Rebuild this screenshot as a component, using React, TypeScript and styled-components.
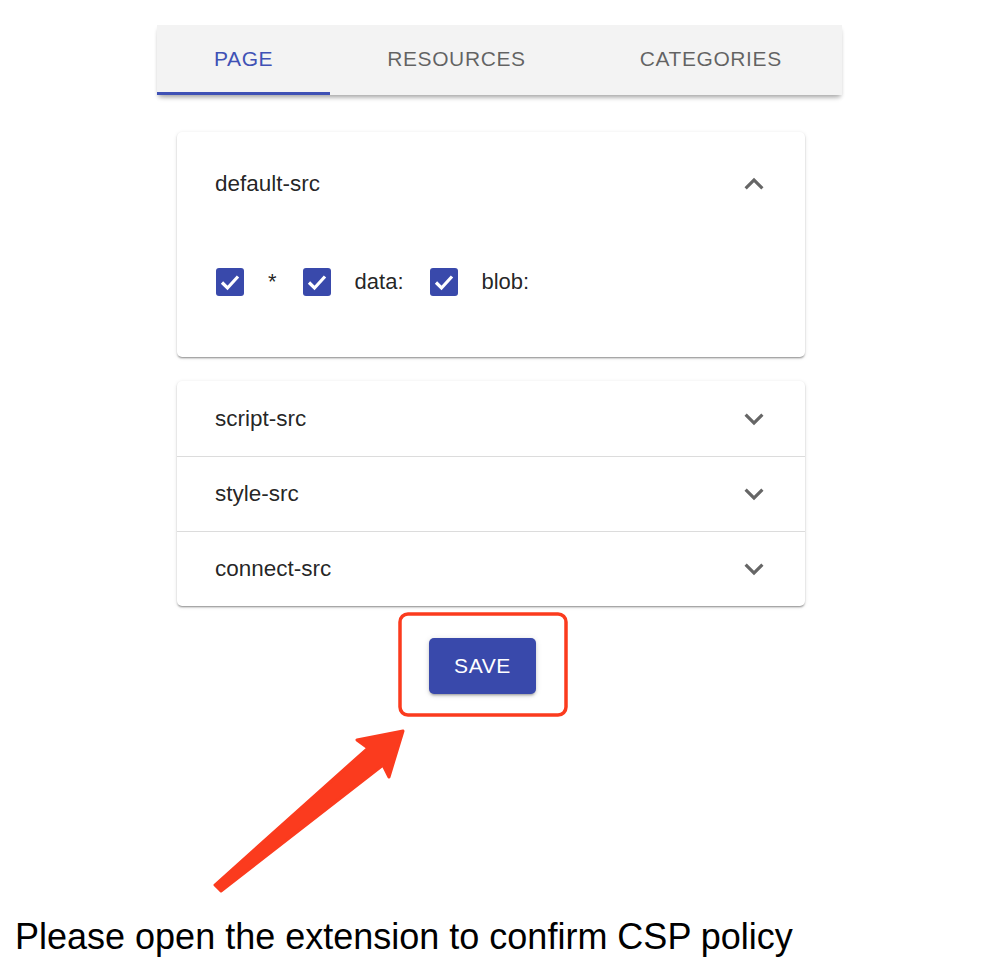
import * as React from "react";
import styled, { createGlobalStyle } from "styled-components";

const GlobalStyle = createGlobalStyle`
  *, *::before, *::after {
    box-sizing: border-box;
  }
  html, body {
    margin: 0;
    padding: 0;
    background: #ffffff;
  }
  body {
    font-family: "Liberation Sans", Arial, Helvetica, sans-serif;
    color: rgba(0, 0, 0, 0.87);
  }
`;

const tabs = ["PAGE", "RESOURCES", "CATEGORIES"];
const sources = ["*", "data:", "blob:"];
const collapsed = ["script-src", "style-src", "connect-src"];

const ChevronIcon = ({ up }: { up?: boolean }) => (
  <Chevron viewBox="0 0 24 24" $up={up}>
    <path d="M16.59 8.59L12 13.17 7.41 8.59 6 10l6 6 6-6z" fill="currentColor" />
  </Chevron>
);

const CheckMark = () => (
  <svg viewBox="0 0 28 28" width="28" height="28">
    <path
      d="M6 14.5 L11.5 20 L22 8.5"
      fill="none"
      stroke="#ffffff"
      strokeWidth="3.2"
    />
  </svg>
);

export default () => {
  return (
    <>
      <GlobalStyle />
      <Root>
        <Popup>
          <TabBar>
            {tabs.map((t, i) => (
              <Tab key={t} $active={i === 0}>
                {t}
              </Tab>
            ))}
          </TabBar>
          <Content>
            <Card>
              <Summary $expanded>
                <Title>default-src</Title>
                <ChevronIcon up />
              </Summary>
              <Details>
                {sources.map((s) => (
                  <CheckLabel key={s}>
                    <CheckBox>
                      <CheckMark />
                    </CheckBox>
                    <span>{s}</span>
                  </CheckLabel>
                ))}
              </Details>
            </Card>
            <Card>
              {collapsed.map((name) => (
                <Summary key={name}>
                  <Title>{name}</Title>
                  <ChevronIcon />
                </Summary>
              ))}
            </Card>
            <ButtonRow>
              <SaveButton>SAVE</SaveButton>
            </ButtonRow>
          </Content>
        </Popup>
        <Caption>Please open the extension to confirm CSP policy</Caption>
        <Annotation viewBox="0 0 984 980" width="984" height="980">
          <rect
            x="400"
            y="614"
            width="166"
            height="101"
            rx="8"
            fill="none"
            stroke="#fb3b1e"
            strokeWidth="3.5"
          />
          <path
            d="M215 885 L368 748 L357 740 L403 731 L389 777 L383 765 L221 891 Z"
            fill="#fb3b1e"
            stroke="#fb3b1e"
            strokeWidth="3"
            strokeLinejoin="round"
          />
        </Annotation>
      </Root>
    </>
  );
};

// ----------------------------------------------------------------------------

const Root = styled.div`
  position: relative;
  width: 984px;
  height: 980px;
  overflow: hidden;
  padding-top: 25px;
`;

const Popup = styled.div`
  margin-left: 157px;
  width: 685px;
  display: flex;
  flex-direction: column;
`;

const TabBar = styled.div`
  display: flex;
  height: 70px;
  background: #f3f3f3;
  box-shadow: 0 3px 4px -1px rgba(0, 0, 0, 0.22), 0 5px 6px -3px rgba(0, 0, 0, 0.2);
  position: relative;
  z-index: 1;
`;

const Tab = styled.div<{ $active?: boolean }>`
  padding: 0 57px;
  display: flex;
  align-items: center;
  justify-content: center;
  font-size: 21px;
  letter-spacing: 0.02857em;
  color: ${(p) => (p.$active ? "#3f51b5" : "rgba(0, 0, 0, 0.6)")};
  border-bottom: 3px solid ${(p) => (p.$active ? "#3f51b5" : "transparent")};
`;

const Content = styled.div`
  display: flex;
  flex-direction: column;
  gap: 24px;
  padding: 37px 37px 0 20px;
`;

const Card = styled.div`
  background: #ffffff;
  border-radius: 5px;
  box-shadow: 0 2px 2px -1px rgba(0, 0, 0, 0.3), 0 1px 2px 0 rgba(0, 0, 0, 0.14),
    0 1px 4px 0 rgba(0, 0, 0, 0.1);
  display: flex;
  flex-direction: column;
`;

const Summary = styled.div<{ $expanded?: boolean }>`
  height: ${(p) => (p.$expanded ? "104px" : "75px")};
  display: flex;
  align-items: center;
  justify-content: space-between;
  padding: 0 32px 0 38px;

  & + & {
    border-top: 1px solid #dcdcdc;
  }
`;

const Title = styled.div`
  font-size: 22.5px;
  color: rgba(0, 0, 0, 0.87);
`;

const Chevron = styled.svg<{ $up?: boolean }>`
  width: 38px;
  height: 38px;
  color: #666666;
  transform: ${(p) => (p.$up ? "rotate(180deg)" : "none")};
`;

const Details = styled.div`
  display: flex;
  align-items: center;
  padding: 32px 38px 61px 39px;
`;

const CheckLabel = styled.label`
  display: flex;
  align-items: center;
  margin-right: 26px;
  font-size: 22px;
  line-height: 28px;
  color: rgba(0, 0, 0, 0.87);
`;

const CheckBox = styled.span`
  width: 28px;
  height: 28px;
  border-radius: 3px;
  background: #3949ab;
  margin-right: 24px;
  display: flex;
`;

const ButtonRow = styled.div`
  display: flex;
  padding: 8px 0 0 252px;
`;

const SaveButton = styled.button`
  width: 107px;
  height: 56px;
  border: none;
  border-radius: 5px;
  background: #3949ab;
  color: #ffffff;
  font-family: "Liberation Sans", Arial, sans-serif;
  font-size: 21px;
  letter-spacing: 0.02857em;
  box-shadow: 0 3px 2px -2px rgba(0, 0, 0, 0.2), 0 2px 3px 0 rgba(0, 0, 0, 0.14),
    0 1px 6px 0 rgba(0, 0, 0, 0.12);
  padding: 0;
`;

const Caption = styled.div`
  margin: 223px 0 0 15px;
  font-size: 36px;
  line-height: 40px;
  color: #000000;
  white-space: nowrap;
`;

const Annotation = styled.svg`
  position: absolute;
  left: 0;
  top: 0;
  pointer-events: none;
`;
